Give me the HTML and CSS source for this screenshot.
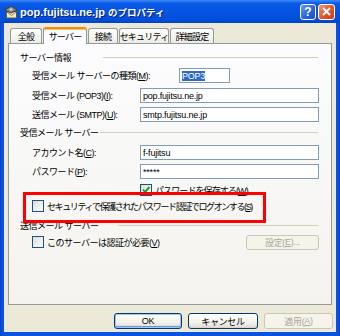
FILE: index.html
```html
<!DOCTYPE html>
<html lang="ja">
<head>
<meta charset="utf-8">
<link rel="stylesheet" href="styles.css">
</head>
<body>
<div class="window">
  <div class="titlebar">
    <svg class="app-icon" width="14" height="14" viewBox="0 0 14 14">
      <rect x="2.5" y="6.5" width="10" height="6.5" fill="#f3ebbd" stroke="#5d5a45"/>
      <path d="M3 7 L7.5 10.5 L12 7" fill="none" stroke="#8a8566"/>
      <path d="M0.5 5 L7 1 L13.5 5 L7 8 Z" fill="#808080" stroke="#3e3e3e"/>
      <rect x="5.5" y="3.5" width="3" height="2" fill="#d8d8d8"/>
    </svg>
    <span class="title">pop.fujitsu.ne.jp <span class="title-cjk">のプロパティ</span></span>
    <span class="tb-btn help">?</span>
    <span class="tb-btn close">
      <svg width="9" height="9" viewBox="0 0 9 9"><path d="M1 1 L8 8 M8 1 L1 8" stroke="#fff" stroke-width="2"/></svg>
    </span>
  </div>
  <div class="client">
    <div class="tabs">
      <div class="tab tab-w32">全般</div>
      <div class="tab active tab-w45">サーバー</div>
      <div class="tab tab-w30">接続</div>
      <div class="tab tab-w50">セキュリティ</div>
      <div class="tab tab-w45">詳細設定</div>
    </div>
    <div class="panel">
      <div class="sec-head">
        <span class="sec-label sl-83">サーバー情報</span><span class="sec-line"></span>
      </div>
      <div class="row mt4">
        <span class="lbl lbl-wide">受信メール サーバーの種類(<u>M</u>):</span>
        <span class="field pop3"><span class="sel">POP3</span></span>
      </div>
      <div class="row mt5">
        <span class="lbl">受信メール (POP3)(<u>I</u>):</span>
        <span class="field">pop.fujitsu.ne.jp</span>
      </div>
      <div class="row mt4">
        <span class="lbl">送信メール (SMTP)(<u>U</u>):</span>
        <span class="field">smtp.fujitsu.ne.jp</span>
      </div>
      <div class="sec-head mt3">
        <span class="sec-label sl-80">受信メール サーバー</span><span class="sec-line"></span>
      </div>
      <div class="row mt6">
        <span class="lbl">アカウント名(<u>C</u>):</span>
        <span class="field">f-fujitsu</span>
      </div>
      <div class="row mt4">
        <span class="lbl">パスワード(<u>P</u>):</span>
        <span class="field">*****</span>
      </div>
      <div class="row check-row mt5 indent-pw">
        <span class="cb checked">
          <svg width="10" height="10" viewBox="0 0 10 10"><path d="M2 4.5 L4 7 L8.5 2" fill="none" stroke="#21a121" stroke-width="2"/></svg>
        </span>
        <span class="tight">パスワードを保存する(<u>W</u>)</span>
      </div>
      <div class="row check-row mt4">
        <span class="highlight">
          <span class="cb"></span>
          <span class="tighter">セキュリティで保護されたパスワード認証でログオンする(<u>S</u>)</span>
        </span>
      </div>
      <div class="sec-head mt6">
        <span class="sec-label sl-98">送信メール サーバー</span><span class="sec-line"></span>
      </div>
      <div class="row check-row mt4">
        <span class="cb"></span>
        <span>このサーバーは認証が必要(<u>V</u>)</span>
        <span class="spacer"></span>
        <span class="btn disabled btn-settings">設定(<u>E</u>)...</span>
      </div>
    </div>
    <div class="buttons">
      <span class="btn default btn-ok">OK</span>
      <span class="btn btn-cancel">キャンセル</span>
      <span class="btn disabled btn-apply">適用(<u>A</u>)</span>
    </div>
  </div>
</div>
</body>
</html>
```

FILE: styles.css
```css
* { box-sizing: border-box; }

body {
  margin: 0;
  width: 340px;
  height: 336px;
  overflow: hidden;
  font-family: "Liberation Sans", "Noto Sans CJK JP", sans-serif;
  color: #000;
}

.window {
  width: 340px;
  height: 336px;
  display: flex;
  flex-direction: column;
  background: linear-gradient(90deg, #0a3fc8 0, #0a52e0 2px, #0a52e0 calc(100% - 2px), #0a3fc8 100%);
}

.titlebar {
  height: 23px;
  flex: none;
  display: flex;
  align-items: center;
  padding: 0 5px 0 4px;
  background: linear-gradient(#3d8af7 0, #0b5ae8 15%, #0455e3 45%, #0250dc 80%, #0043c6 100%);
}

.app-icon { flex: none; margin-right: 2px; }

.title {
  flex: 1;
  color: #fff;
  font-weight: bold;
  font-size: 11px;
  text-shadow: 1px 1px 0 #0a1d7a;
  white-space: nowrap;
}

.title-cjk { font-size: 9.5px; }

.tb-btn {
  flex: none;
  width: 16px;
  height: 16px;
  border: 1px solid #fff;
  border-radius: 3px;
  display: flex;
  align-items: center;
  justify-content: center;
}

.help {
  margin-right: 2px;
  background: linear-gradient(135deg, #6a9cf5, #2661e0 60%, #1b4fcf);
  color: #fff;
  font-weight: bold;
  font-size: 12px;
}

.close {
  width: 17px;
  background: linear-gradient(135deg, #f29a7a, #e0582f 50%, #c83d14);
}

.client {
  flex: 1;
  margin: 0 4px 4px;
  background: #ece9d8;
  padding: 4px 4px 3px 4px;
  display: flex;
  flex-direction: column;
}

.tabs {
  display: flex;
  align-items: flex-end;
  height: 16px;
  padding-left: 2px;
  position: relative;
  z-index: 2;
  flex: none;
}

.tab {
  height: 15px;
  border: 1px solid #919b9c;
  border-bottom: none;
  border-radius: 3px 3px 0 0;
  background: linear-gradient(#ffffff, #ecebe6);
  font-size: 9px;
  letter-spacing: -0.8px;
  display: flex;
  align-items: center;
  justify-content: center;
  white-space: nowrap;
  margin-right: 1px;
  padding: 0;
}

.tab.active {
  height: 17px;
  margin-bottom: -1px;
  background: #fcfcfe;
  border-top: 2px solid #e68b2c;
  box-shadow: inset 0 1px 0 #ffc83c;
  padding-bottom: 1px;
}

.tab-w30 { width: 30px; }
.tab-w32 { width: 32px; }
.tab-w45 { width: 44px; }
.tab-w50 { width: 50px; }

.panel {
  height: 262px;
  flex: none;
  border: 1px solid #919b9c;
  background: linear-gradient(#fcfcfe, #f4f3ee);
  padding: 6px 12px 0 11px;
  display: flex;
  flex-direction: column;
  letter-spacing: -0.5px;
}

.sec-head {
  display: flex;
  align-items: center;
  height: 14px;
  font-size: 9px;
  flex: none;
}

.sec-label { flex: none; white-space: nowrap; }
.sl-80 { width: 80px; }
.sl-83 { width: 83px; }
.sl-98 { width: 98px; }

.sec-line {
  flex: 1;
  height: 1px;
  background: #d0d0bf;
  margin-right: 1px;
}

.mt3 { margin-top: 3px; }
.mt4 { margin-top: 4px; }
.mt5 { margin-top: 5px; }
.mt6 { margin-top: 6px; }

.row {
  display: flex;
  align-items: center;
  height: 15px;
  padding-left: 12px;
  font-size: 9px;
  flex: none;
  white-space: nowrap;
}

.lbl { width: 108px; flex: none; }
.lbl-wide { width: 147px; }

.field {
  flex: 1;
  height: 15px;
  border: 1px solid #7f9db9;
  background: #fff;
  font-size: 9px;
  padding-left: 2px;
  display: flex;
  align-items: center;
  letter-spacing: -0.2px;
  font-family: "Liberation Sans", sans-serif;
}

.field.pop3 { flex: none; width: 51px; }

.sel { background: #316ac5; color: #fff; }

.check-row { height: 12px; }
.indent-pw { padding-left: 120px; }

.tight { letter-spacing: -0.9px; }
.tighter { letter-spacing: -1.4px; }

.cb {
  flex: none;
  width: 12px;
  height: 12px;
  border: 1px solid #1c5180;
  background: linear-gradient(135deg, #dcdcd7, #ffffff);
  margin-right: 3px;
  display: flex;
  align-items: center;
  justify-content: center;
}

.highlight {
  position: relative;
  display: flex;
  align-items: center;
}

.highlight::after {
  content: "";
  position: absolute;
  left: -9px;
  top: -8px;
  width: 237px;
  height: 25px;
  border: 3px solid #ff0000;
}

.spacer { flex: 1; }

.btn {
  height: 16px;
  border: 1px solid #003c74;
  border-radius: 3px;
  background: linear-gradient(#ffffff, #f3f2ec 60%, #e3e0d3 90%, #d6d0c5);
  font-size: 9px;
  letter-spacing: -0.3px;
  display: flex;
  align-items: center;
  justify-content: center;
  white-space: nowrap;
}

.btn.default { box-shadow: inset 0 0 0 1px #a7c4f3, inset 0 -1px 0 1px #6d95e0; }

.btn.disabled {
  border-color: #c9c7ba;
  color: #aca899;
  background: #f5f4ea;
}

.btn-settings { width: 73px; height: 15px; }

.buttons {
  display: flex;
  justify-content: flex-end;
  gap: 6px;
  margin-top: 8px;
  margin-right: -1px;
  flex: none;
}

.btn-ok { width: 68px; }
.btn-cancel { width: 70px; }
.btn-apply { width: 69px; }
```
